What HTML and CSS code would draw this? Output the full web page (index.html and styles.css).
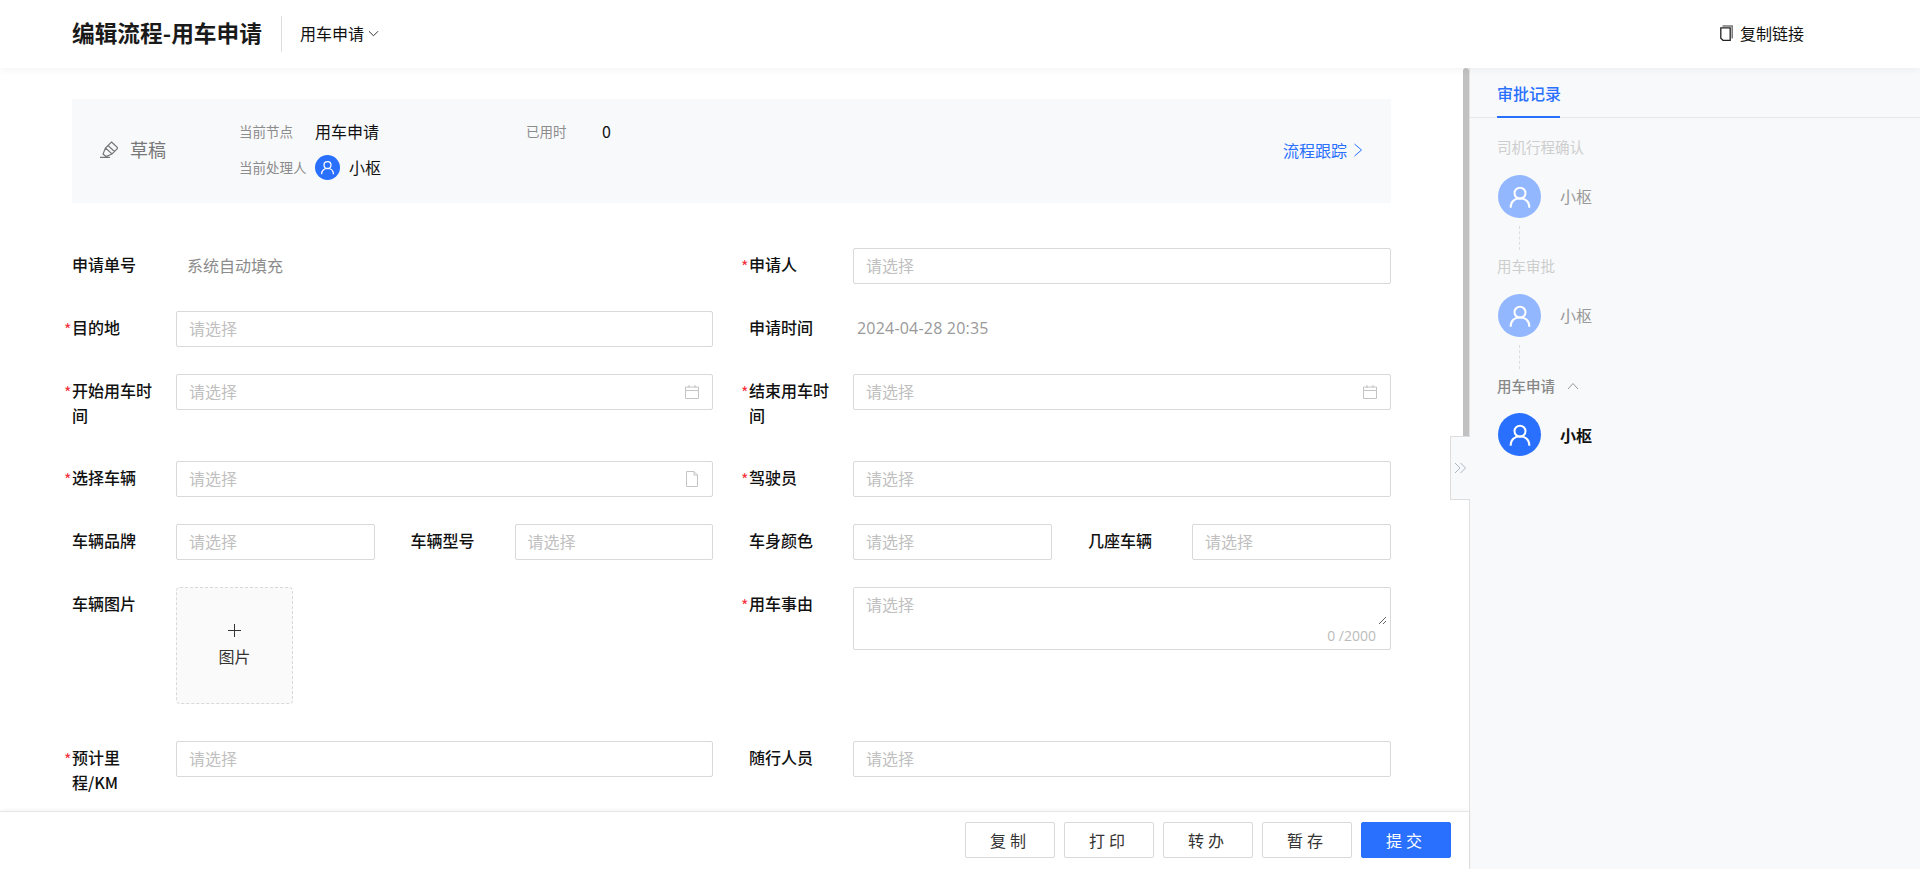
FILE: index.html
```html
<!DOCTYPE html>
<html lang="zh-CN">
<head>
  <meta charset="UTF-8" />
  <meta name="viewport" content="width=device-width, initial-scale=1.0" />
  <title>编辑流程-用车申请</title>
  <link rel="stylesheet" href="styles.css">
</head>
<body>
  <header class="top-bar">
    <h1 class="page-title">编辑流程-用车申请</h1>
    <div class="flow-select">
      <span>用车申请</span>
      <svg class="chevron" viewBox="0 0 12 12"><path d="M1 3.500 6 8.500 11 3.500" /></svg>
    </div>
    <div class="copy-link">
      <svg class="copy-icon" viewBox="0 0 13 16"><path d="M2.500 1H12.200V13.500" stroke="#777" stroke-width="1.500" /><path d="M.8 2.800H10.200V15.300H3L.8 13.200Z" stroke="#222" stroke-width="1.300" /></svg>
      <span>复制链接</span>
    </div>
  </header>

  <div class="page-body">
    <main class="main-panel">
      <div class="scroll-thumb"></div>
      <div class="main-scroll">
        <section class="status-card">
          <div class="status-state">
            <svg class="draft-icon" viewBox="0 0 18 17"><path d="M11.500 1 18 7 12 13 5.500 7ZM5.500 7 3 13 6 15.500 12 13M8 4.500 14.500 10.500M0 16.300H10" /></svg>
            <span>草稿</span>
          </div>
          <div class="status-info">
            <div class="info-row">
              <span class="info-label">当前节点</span>
              <span class="info-value">用车申请</span>
              <span class="info-label used-label">已用时</span>
              <span class="info-value">0</span>
            </div>
            <div class="info-row">
              <span class="info-label">当前处理人</span>
              <span class="avatar avatar-small">
                <svg viewBox="0 0 24 24"><circle cx="12" cy="8.900" r="4.400" /><path d="M4.500 20.500c0-4.500 3.200-7.500 7.500-7.500s7.500 3 7.500 7.500" /></svg>
              </span>
              <span class="info-value">小枢</span>
            </div>
          </div>
          <a class="track-link">流程跟踪
            <svg class="chevron-right" viewBox="0 0 10 14"><path d="M1.500 1 8.500 7 1.500 13" /></svg>
          </a>
        </section>

        <form class="flow-form">
          <div class="field">
            <label class="field-label">申请单号</label>
            <div class="field-text">系统自动填充</div>
          </div>
          <div class="field">
            <label class="field-label required">申请人</label>
            <input class="text-input" placeholder="请选择">
          </div>

          <div class="field">
            <label class="field-label required">目的地</label>
            <input class="text-input" placeholder="请选择">
          </div>
          <div class="field">
            <label class="field-label">申请时间</label>
            <div class="field-text field-time">2024-04-28 20:35</div>
          </div>

          <div class="field">
            <label class="field-label required">开始用车时间</label>
            <div class="input-wrap">
              <input class="text-input" placeholder="请选择">
              <svg class="input-icon" viewBox="0 0 14 14"><path d="M.5 2H13.500V13.500H.5ZM.5 5.500H13.500M4 0V3M10 0V3" /></svg>
            </div>
          </div>
          <div class="field">
            <label class="field-label required">结束用车时间</label>
            <div class="input-wrap">
              <input class="text-input" placeholder="请选择">
              <svg class="input-icon" viewBox="0 0 14 14"><path d="M.5 2H13.500V13.500H.5ZM.5 5.500H13.500M4 0V3M10 0V3" /></svg>
            </div>
          </div>

          <div class="field">
            <label class="field-label required">选择车辆</label>
            <div class="input-wrap">
              <input class="text-input" placeholder="请选择">
              <svg class="input-icon file-icon" viewBox="0 0 14 16"><path d="M1.500 .5H9L12.500 4V15.500H1.500ZM9 .5V4H12.500" /></svg>
            </div>
          </div>
          <div class="field">
            <label class="field-label required">驾驶员</label>
            <input class="text-input" placeholder="请选择">
          </div>

          <div class="field-pair">
            <div class="field">
              <label class="field-label">车辆品牌</label>
              <input class="text-input" placeholder="请选择">
            </div>
            <div class="field">
              <label class="field-label">车辆型号</label>
              <input class="text-input" placeholder="请选择">
            </div>
          </div>
          <div class="field-pair">
            <div class="field">
              <label class="field-label">车身颜色</label>
              <input class="text-input" placeholder="请选择">
            </div>
            <div class="field">
              <label class="field-label">几座车辆</label>
              <input class="text-input" placeholder="请选择">
            </div>
          </div>

          <div class="field field-tall">
            <label class="field-label">车辆图片</label>
            <div class="upload-box">
              <svg class="upload-plus" viewBox="0 0 13 13"><path d="M6.500 0V13M0 6.500H13" /></svg>
              <span>图片</span>
            </div>
          </div>
          <div class="field">
            <label class="field-label required">用车事由</label>
            <div class="textarea-wrap">
              <textarea class="text-area" placeholder="请选择"></textarea>
              <div class="text-count">0 /2000</div>
            </div>
          </div>

          <div class="field">
            <label class="field-label required">预计里程/KM</label>
            <input class="text-input" placeholder="请选择">
          </div>
          <div class="field">
            <label class="field-label">随行人员</label>
            <input class="text-input" placeholder="请选择">
          </div>
        </form>
      </div>

      <footer class="action-bar">
        <button class="action-button">复制</button>
        <button class="action-button">打印</button>
        <button class="action-button">转办</button>
        <button class="action-button">暂存</button>
        <button class="action-button primary">提交</button>
      </footer>
    </main>

    <aside class="side-panel">
      <div class="collapse-tab">
        <svg viewBox="0 0 13 12"><path d="M1 1 6 6 1 11M6.500 1 11.500 6 6.500 11" /></svg>
      </div>
      <div class="side-tabs">
        <div class="side-tab">审批记录</div>
      </div>
      <div class="record-list">
        <div class="record-title">司机行程确认</div>
        <div class="record-person">
          <span class="avatar avatar-large faded">
            <svg viewBox="0 0 24 24"><circle cx="12" cy="8.900" r="4.400" /><path d="M4.500 20.500c0-4.500 3.200-7.500 7.500-7.500s7.500 3 7.500 7.500" /></svg>
          </span>
          <span class="record-name">小枢</span>
        </div>
        <div class="record-line"></div>
        <div class="record-title">用车审批</div>
        <div class="record-person">
          <span class="avatar avatar-large faded">
            <svg viewBox="0 0 24 24"><circle cx="12" cy="8.900" r="4.400" /><path d="M4.500 20.500c0-4.500 3.200-7.500 7.500-7.500s7.500 3 7.500 7.500" /></svg>
          </span>
          <span class="record-name">小枢</span>
        </div>
        <div class="record-line"></div>
        <div class="record-title current">用车申请
          <svg class="chevron-up" viewBox="0 0 12 8"><path d="M1 7 6 1.500 11 7" /></svg>
        </div>
        <div class="record-person">
          <span class="avatar avatar-large">
            <svg viewBox="0 0 24 24"><circle cx="12" cy="8.900" r="4.400" /><path d="M4.500 20.500c0-4.500 3.200-7.500 7.500-7.500s7.500 3 7.500 7.500" /></svg>
          </span>
          <span class="record-name current">小枢</span>
        </div>
      </div>
    </aside>
  </div>
</body>
</html>
```

FILE: styles.css
```css
html, body {
  margin: 0;
  height: 100%;
  overflow: hidden;
  background-color: white;
  color: #111;
  font-family: "Noto Sans CJK SC", "Noto Sans", sans-serif;
  font-size: 16px;
}

svg {
  fill: none;
  stroke: currentColor;
  stroke-width: 1;
  display: block;
}

/* top bar */
.top-bar {
  height: 68px;
  box-sizing: border-box;
  padding: 16px 116px 16px 72px;
  display: flex;
  align-items: center;
  position: relative;
  z-index: 3;
  background-color: white;
  box-shadow: 0 1px 8px rgba(0, 0, 0, 0.06);
}

.page-title {
  margin: 0;
  padding-right: 19px;
  border-right: 1px solid #ddd;
  height: 36px;
  line-height: 34px;
  font-size: 22.700px;
  font-weight: 700;
  color: #1a1a1a;
}

.flow-select {
  margin: 0 0 2px 18px;
  display: flex;
  align-items: center;
  gap: 4px;
}

.chevron {
  width: 11px;
  height: 11px;
  color: #222;
}

.copy-link {
  margin: 0 0 2px auto;
  display: flex;
  align-items: center;
  gap: 7px;
}

.copy-icon {
  width: 13px;
  height: 16px;
}

/* page */
.page-body {
  height: calc(100% - 68px);
  display: flex;
}

.main-panel {
  width: 1469px;
  flex-shrink: 0;
  display: flex;
  flex-direction: column;
  position: relative;
  border-right: 1px solid #e2e2e2;
}

.scroll-thumb {
  position: absolute;
  top: 0;
  right: 0;
  width: 6px;
  height: 400px;
  background-color: #c1c1c1;
  border-radius: 3px 3px 0 0;
}

.main-scroll {
  flex: 1;
  min-height: 0;
  overflow: hidden;
  padding: 31px 78px 0 72px;
}

/* status card */
.status-card {
  height: 104px;
  padding: 0 28px;
  display: flex;
  align-items: center;
  background-color: #f8f9fb;
}

.status-state {
  width: 139px;
  margin-bottom: 4px;
  display: flex;
  align-items: center;
  gap: 12px;
  font-size: 18px;
  color: #777;
}

.draft-icon {
  width: 18px;
  height: 17px;
  stroke-width: 1.200;
  color: #777;
}

.status-info {
  padding-bottom: 4px;
  display: flex;
  flex-direction: column;
  gap: 11px;
}

.info-row {
  height: 25px;
  display: flex;
  align-items: center;
}

.info-label {
  width: 76px;
  font-size: 13.500px;
  color: #8c8c8c;
}

.info-value {
  color: #111;
}

.used-label {
  margin-left: 147px;
}

.avatar {
  display: flex;
  align-items: center;
  justify-content: center;
  flex-shrink: 0;
  border-radius: 50%;
  background-color: #2970ff;
  color: white;
}

.avatar-small {
  width: 25px;
  height: 25px;
  margin-right: 9px;
}

.avatar-small svg {
  width: 19px;
  height: 19px;
  stroke-width: 1.600;
}

.avatar-large {
  width: 43px;
  height: 43px;
}

.avatar-large svg {
  width: 30px;
  height: 30px;
  stroke-width: 1.600;
}

.avatar.faded {
  background-color: #93b7ff;
}

.track-link {
  margin: 0 0 2px auto;
  display: flex;
  align-items: center;
  gap: 6px;
  color: #2970ff;
}

.chevron-right {
  width: 10px;
  height: 14px;
}

/* form */
.flow-form {
  margin-top: 45px;
  display: grid;
  grid-template-columns: 641px 642px;
  column-gap: 36px;
  row-gap: 27px;
}

.field-pair {
  display: grid;
  grid-template-columns: 1fr 1fr;
  column-gap: 36px;
}

.field {
  display: flex;
  align-items: flex-start;
  min-width: 0;
}

.field-label {
  width: 104px;
  flex-shrink: 0;
  box-sizing: border-box;
  padding: 4px 16px 6px 0;
  position: relative;
  line-height: 25px;
  font-weight: 500;
  color: #111;
}

.field-label.required::before {
  content: "*";
  position: absolute;
  left: -8px;
  top: 6px;
  color: #f5303d;
  font-weight: 400;
}

.field-text {
  height: 34px;
  line-height: 34px;
  padding-left: 11px;
  color: #8c8c8c;
}

.field-time {
  padding-left: 4px;
  font-family: "Open Sans", sans-serif;
  letter-spacing: 0.2px;
  color: #999;
}

.text-input {
  flex: 1;
  min-width: 0;
  width: 100%;
  height: 36px;
  box-sizing: border-box;
  padding: 0 12px 2px;
  border: 1px solid #d9d9d9;
  border-radius: 2px;
  font: inherit;
  outline: none;
}

.text-input::placeholder, .text-area::placeholder {
  color: #c0c0c0;
}

.input-wrap {
  flex: 1;
  position: relative;
}

.input-icon {
  position: absolute;
  right: 14px;
  top: 11px;
  width: 14px;
  height: 14px;
  color: #c4c4c4;
}

.input-icon.file-icon {
  top: 10px;
  height: 16px;
}

.field-tall {
  padding-bottom: 10px;
}

.upload-box {
  width: 117px;
  height: 117px;
  box-sizing: border-box;
  border: 1px dashed #d9d9d9;
  border-radius: 4px;
  background-color: #fafafa;
  display: flex;
  flex-direction: column;
  align-items: center;
  justify-content: center;
  gap: 7px;
  color: #333;
}

.upload-plus {
  width: 13px;
  height: 13px;
}

.textarea-wrap {
  flex: 1;
  height: 63px;
  box-sizing: border-box;
  border: 1px solid #d9d9d9;
  border-radius: 2px;
  position: relative;
}

.text-area {
  display: block;
  width: calc(100% - 3px);
  height: 37px;
  box-sizing: border-box;
  padding: 3px 12px 0;
  border: none;
  outline: none;
  font: inherit;
  line-height: 26px;
}

.text-count {
  position: absolute;
  right: 14px;
  bottom: 4px;
  font-family: "Open Sans", sans-serif;
  font-size: 14px;
  color: #bbb;
}

/* footer */
.action-bar {
  height: 58px;
  flex-shrink: 0;
  box-sizing: border-box;
  padding: 10px 18px 0 0;
  border-top: 1px solid #e6e6e6;
  display: flex;
  justify-content: flex-end;
  gap: 9px;
  position: relative;
  z-index: 1;
  background-color: white;
  box-shadow: 0 -1px 4px rgba(0, 0, 0, 0.05);
}

.action-button {
  width: 90px;
  height: 36px;
  border: 1px solid #d9d9d9;
  border-radius: 2px;
  background-color: white;
  font: inherit;
  letter-spacing: 4px;
  color: #333;
}

.action-button.primary {
  border-color: #2970ff;
  background-color: #2970ff;
  color: white;
}

/* side panel */
.side-panel {
  flex: 1;
  position: relative;
  background-color: #f8f9fb;
}

.collapse-tab {
  position: absolute;
  left: -20px;
  top: 368px;
  width: 20px;
  height: 64px;
  box-sizing: border-box;
  border: 1px solid #ddd;
  border-right: none;
  background-color: #f8f9fb;
  display: flex;
  align-items: center;
  justify-content: center;
  color: #aeb6c2;
}

.collapse-tab svg {
  width: 13px;
  height: 12px;
}

.side-tabs {
  height: 50px;
  box-sizing: border-box;
  padding-left: 27px;
  border-bottom: 1px solid #e5e7eb;
}

.side-tab {
  width: 63px;
  height: 50px;
  box-sizing: border-box;
  border-bottom: 2px solid #2970ff;
  line-height: 50px;
  font-weight: 500;
  white-space: nowrap;
  color: #2970ff;
}

.record-list {
  padding: 18px 27px 0;
}

.record-title {
  display: flex;
  align-items: center;
  gap: 12px;
  height: 23px;
  box-sizing: border-box;
  padding-bottom: 2px;
  font-size: 14.500px;
  color: #cdcdcd;
}

.record-title.current {
  padding-bottom: 0;
  font-weight: 500;
  color: #888;
}

.chevron-up {
  width: 12px;
  height: 8px;
  color: #999;
}

.record-person {
  margin-top: 16px;
  padding-left: 1px;
  display: flex;
  align-items: center;
  gap: 19px;
}

.record-name {
  margin-bottom: 2px;
  color: #999;
}

.record-name.current {
  margin-bottom: 0;
  font-weight: 700;
  color: #111;
}

.record-line {
  width: 0;
  height: 24px;
  margin: 8px 0 5px 22px;
  border-left: 1px dashed #ddd;
}
```
